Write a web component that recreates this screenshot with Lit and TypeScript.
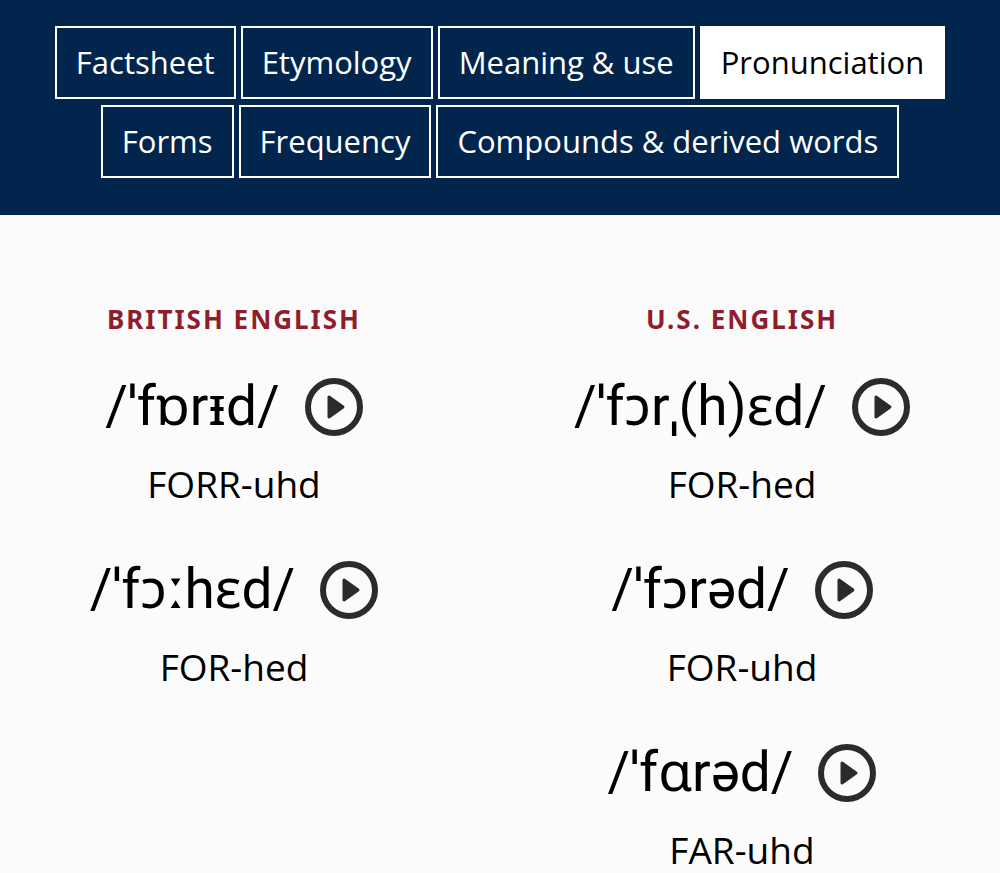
import { LitElement, html, css } from "lit";
import { customElement, property } from "lit/decorators.js";

interface Pronunciation {
  ipa: string;
  respelling: string;
}

interface Accent {
  title: string;
  items: Pronunciation[];
}

const TABS = [
  "Factsheet",
  "Etymology",
  "Meaning & use",
  "Pronunciation",
  "Forms",
  "Frequency",
  "Compounds & derived words",
];

const ACCENTS: Accent[] = [
  {
    title: "British English",
    items: [
      { ipa: "/ˈfɒrᵻd/", respelling: "FORR-uhd" },
      { ipa: "/ˈfɔːhɛd/", respelling: "FOR-hed" },
    ],
  },
  {
    title: "U.S. English",
    items: [
      { ipa: "/ˈfɔrˌ(h)ɛd/", respelling: "FOR-hed" },
      { ipa: "/ˈfɔrəd/", respelling: "FOR-uhd" },
      { ipa: "/ˈfɑrəd/", respelling: "FAR-uhd" },
    ],
  },
];

@customElement("entry-tabs")
export class EntryTabs extends LitElement {
  @property() current = "";

  static styles = css`
    :host {
      display: block;
      background: #02254d;
      padding: 26px 24px 37px;
    }
    .tabs {
      display: flex;
      flex-wrap: wrap;
      justify-content: center;
      gap: 6px 5px;
    }
    .tab {
      box-sizing: border-box;
      border: 2px solid #fff;
      padding: 14px 19px 15px;
      color: #fff;
      font-size: 31px;
      line-height: 40px;
      text-decoration: none;
      white-space: nowrap;
    }
    .active {
      background: #fff;
      color: #000;
    }
  `;

  render() {
    return html`<nav class="tabs">
      ${TABS.map(
        (tab) => html`<a
          class="tab ${tab === this.current ? "active" : ""}"
          href="#"
          >${tab}</a
        >`
      )}
    </nav>`;
  }
}

@customElement("accent-column")
export class AccentColumn extends LitElement {
  @property({ attribute: false }) accent!: Accent;

  static styles = css`
    :host {
      display: block;
      text-align: center;
    }
    .title {
      margin: 0 0 34px;
      color: #8f1d2c;
      font-family: "Noto Sans", sans-serif;
      font-size: 26px;
      line-height: 36px;
      font-weight: 700;
      letter-spacing: 2px;
      text-transform: uppercase;
    }
    .list {
      display: grid;
      gap: 45px;
      margin: 0;
      padding: 0;
      list-style: none;
    }
    .sound {
      display: flex;
      justify-content: center;
      align-items: center;
      gap: 25px;
      height: 72px;
    }
    .ipa {
      padding-bottom: 2px;
      font-family: Roboto, "Noto Sans", sans-serif;
      font-size: 55px;
      line-height: 70px;
      white-space: nowrap;
    }
    .play {
      flex: none;
      width: 58px;
      height: 58px;
      padding: 0;
      border: 0;
      background: none;
      cursor: pointer;
    }
    .icon {
      display: block;
      width: 58px;
      height: 58px;
    }
    .respelling {
      margin: 16px 0 0;
      font-size: 37px;
      line-height: 50px;
    }
  `;

  render() {
    return html`
      <h2 class="title">${this.accent.title}</h2>
      <ul class="list">
        ${this.accent.items.map(
          (item) => html`<li>
            <div class="sound">
              <span class="ipa">${item.ipa}</span>
              <button class="play" type="button" aria-label="Play">
                <svg class="icon" viewBox="0 0 58 58" aria-hidden="true">
                  <circle cx="29" cy="29" r="26" fill="none" stroke="#2b2b2b" stroke-width="6" />
                  <path
                    d="M24 19L38 29L24 39Z"
                    fill="#2b2b2b"
                    stroke="#2b2b2b"
                    stroke-width="3"
                    stroke-linejoin="round"
                  />
                </svg>
              </button>
            </div>
            <p class="respelling">${item.respelling}</p>
          </li>`
        )}
      </ul>
    `;
  }
}

@customElement("app-root")
export class AppRoot extends LitElement {
  static styles = css`
    :host {
      display: block;
      min-height: 100vh;
      background: #fbfbfb;
      color: #000;
      font-family: "Open Sans", "Noto Sans", sans-serif;
    }
    .columns {
      display: grid;
      grid-template-columns: 1fr 1fr;
      gap: 40px;
      padding: 86px 24px 0 0;
    }
  `;

  render() {
    return html`
      <entry-tabs current="Pronunciation"></entry-tabs>
      <main class="columns">
        ${ACCENTS.map((a) => html`<accent-column .accent=${a}></accent-column>`)}
      </main>
    `;
  }
}
